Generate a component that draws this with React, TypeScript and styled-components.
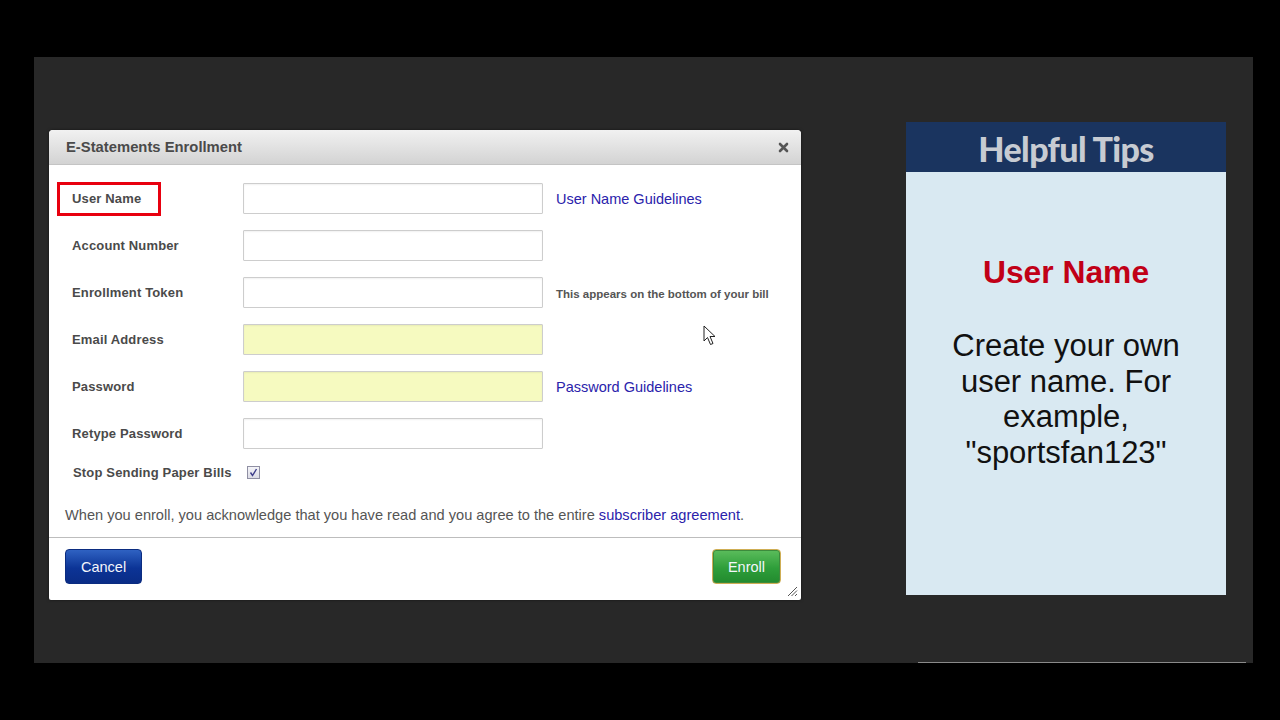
import React from "react";
import styled, { createGlobalStyle } from "styled-components";

const GlobalStyle = createGlobalStyle`
  html, body {
    margin: 0;
    padding: 0;
    background: #000;
    font-family: "Liberation Sans", Arial, sans-serif;
  }
`;

const Screen = styled.div`
  width: 1280px;
  height: 720px;
  background: #000;
  padding: 57px 0 0 34px;
  box-sizing: border-box;
`;

const Stage = styled.div`
  position: relative;
  width: 1219px;
  height: 606px;
  background: #282828;
  display: flex;
  align-items: flex-start;
  padding-left: 15px;
  box-sizing: border-box;

  &::after {
    content: "";
    position: absolute;
    left: 884px;
    right: 7px;
    bottom: 0;
    height: 1px;
    background: #8a8a8a;
  }
`;

const Dialog = styled.div`
  position: relative;
  margin-top: 73px;
  width: 752px;
  height: 470px;
  background: #fff;
  border-radius: 4px 4px 2px 2px;
  box-shadow: 0 0 3px rgba(0, 0, 0, 0.5);
  display: flex;
  flex-direction: column;
`;

const Header = styled.div`
  height: 35px;
  display: flex;
  align-items: center;
  justify-content: space-between;
  padding: 0 12px 0 17px;
  background: linear-gradient(#f1f1f1, #d3d3d3);
  border-radius: 4px 4px 0 0;
  border-bottom: 1px solid #c4c4c4;
  box-sizing: border-box;
`;

const Title = styled.span`
  font-size: 14.8px;
  font-weight: bold;
  color: #4a4a4a;
`;

const Close = styled.button`
  border: 0;
  background: none;
  padding: 0;
  width: 11px;
  height: 11px;
  display: flex;
  cursor: pointer;
`;

const Body = styled.div`
  position: relative;
  flex: 1;
  padding: 18px 0 0 23px;
  display: flex;
  flex-direction: column;
`;

const Rows = styled.div`
  display: grid;
  grid-template-columns: 171px 300px auto;
  grid-auto-rows: 31px;
  row-gap: 16px;
  align-items: center;
`;

const Label = styled.label<{ $highlight?: boolean }>`
  justify-self: start;
  font-size: 13px;
  font-weight: bold;
  letter-spacing: 0.15px;
  color: #4a4a4a;
  line-height: 28px;
  ${(p) =>
    p.$highlight &&
    `
    margin-left: -12px;
    padding: 0 17px 0 12px;
    outline: 3px solid #e8000f;
  `}
`;

const Input = styled.input<{ $filled?: boolean }>`
  width: 300px;
  height: 31px;
  box-sizing: border-box;
  border: 1px solid #cdcdcd;
  border-radius: 1px;
  background: ${(p) => (p.$filled ? "#f6fac0" : "#fff")};
  box-shadow: inset 0 1px 2px rgba(0, 0, 0, 0.06);
  outline: none;
`;

const Aside = styled.div`
  padding-left: 13px;
`;

const Link = styled.a`
  color: #2a22ab;
  font-size: 14.5px;
  text-decoration: none;
`;

const Hint = styled.span`
  font-size: 11.5px;
  font-weight: bold;
  color: #555;
`;

const CheckRow = styled.div`
  display: grid;
  grid-template-columns: 174px auto;
  align-items: center;
  height: 20px;
  margin-top: 13px;
  padding-left: 1px;
`;

const CheckLabel = styled.span`
  font-size: 13px;
  font-weight: bold;
  letter-spacing: 0.17px;
  color: #4a4a4a;
`;

const Check = styled.span`
  width: 13px;
  height: 13px;
  box-sizing: border-box;
  border: 1px solid #8f8fa3;
  background: linear-gradient(#f4f4f8, #dcdce6);
  display: flex;
  align-items: center;
  justify-content: center;
`;

const Note = styled.p`
  margin: 24px 0 0 -7px;
  font-size: 14.6px;
  line-height: 18px;
  color: #555;
  a {
    color: #2a22ab;
    text-decoration: none;
  }
`;

const Footer = styled.div`
  margin-top: 12px;
  border-top: 1px solid #bdbdbd;
  height: 63px;
  box-sizing: border-box;
  padding: 11px 20px 0 16px;
  display: flex;
  align-items: flex-start;
  justify-content: space-between;
`;

const Button = styled.button<{ $tone: "blue" | "green" }>`
  height: 35px;
  padding: 0 ${(p) => (p.$tone === "blue" ? "15px" : "15px")};
  border-radius: 4px;
  font-family: "Liberation Sans", Arial, sans-serif;
  font-size: 14.5px;
  color: #f4f6fb;
  cursor: pointer;
  border: 1px solid ${(p) => (p.$tone === "blue" ? "#0b2c80" : "#cfae55")};
  background: ${(p) =>
    p.$tone === "blue"
      ? "linear-gradient(#2f62c2, #0c3496 55%, #0a2c86)"
      : "linear-gradient(#5cbd5c, #2e9e3a 55%, #228a2e)"};
  box-shadow: ${(p) => (p.$tone === "blue" ? "none" : "inset 0 0 0 1px #3c8b3c")};
`;

const Grip = styled.span`
  position: absolute;
  right: 3px;
  bottom: 3px;
  width: 11px;
  height: 11px;
  display: flex;
`;

const Pointer = styled.span`
  position: absolute;
  left: 654px;
  top: 160px;
  display: flex;
`;

const Tips = styled.aside`
  margin: 65px 0 0 105px;
  width: 320px;
  height: 473px;
  background: #d9e9f2;
  display: flex;
  flex-direction: column;
  align-items: center;
`;

const TipsHeader = styled.div`
  align-self: stretch;
  height: 50px;
  padding-top: 3px;
  box-sizing: border-box;
  background: #1a345f;
  display: flex;
  align-items: center;
  justify-content: center;
  font-family: Lato, "Open Sans", sans-serif;
  font-weight: 900;
  font-size: 34px;
  letter-spacing: -0.6px;
  color: #c7cbd2;
`;

const TipTitle = styled.h2`
  margin: 82px 0 0;
  font-size: 31.8px;
  line-height: 36px;
  font-weight: bold;
  color: #c10017;
`;

const TipText = styled.p`
  margin: 38px 0 0;
  width: 260px;
  text-align: center;
  font-size: 31px;
  line-height: 35.7px;
  color: #111;
`;

const fields = [
  { label: "User Name", highlight: true, aside: <Link href="#">User Name Guidelines</Link> },
  { label: "Account Number" },
  { label: "Enrollment Token", aside: <Hint>This appears on the bottom of your bill</Hint> },
  { label: "Email Address", filled: true },
  { label: "Password", filled: true, aside: <Link href="#">Password Guidelines</Link> },
  { label: "Retype Password" },
];

export default function App() {
  return (
    <>
      <GlobalStyle />
      <Screen>
        <Stage>
          <Dialog>
            <Header>
              <Title>E-Statements Enrollment</Title>
              <Close aria-label="close">
                <svg width="11" height="11" viewBox="0 0 11 11">
                  <path d="M2 2 L9 9 M9 2 L2 9" stroke="#555" strokeWidth="2.6" strokeLinecap="round" />
                </svg>
              </Close>
            </Header>
            <Body>
              <Rows>
                {fields.map((f) => (
                  <React.Fragment key={f.label}>
                    <Label $highlight={f.highlight}>{f.label}</Label>
                    <Input $filled={f.filled} />
                    <Aside>{f.aside}</Aside>
                  </React.Fragment>
                ))}
              </Rows>
              <CheckRow>
                <CheckLabel>Stop Sending Paper Bills</CheckLabel>
                <Check>
                  <svg width="9" height="9" viewBox="0 0 9 9">
                    <path d="M1.5 4.5 L3.5 7.5 L7.5 1" stroke="#3d3d8a" strokeWidth="1.4" fill="none" />
                  </svg>
                </Check>
              </CheckRow>
              <Note>
                When you enroll, you acknowledge that you have read and you agree to the entire{" "}
                <a href="#">subscriber agreement</a>.
              </Note>
              <Pointer>
                <svg width="14" height="21" viewBox="0 0 14 21">
                  <path
                    d="M1 1 L1 16 L4.5 12.5 L7.5 19.5 L10 18.5 L7 11.5 L12 11.5 Z"
                    fill="#fff"
                    stroke="#222"
                    strokeWidth="1"
                    strokeLinejoin="round"
                  />
                </svg>
              </Pointer>
            </Body>
            <Footer>
              <Button $tone="blue">Cancel</Button>
              <Button $tone="green">Enroll</Button>
            </Footer>
            <Grip>
              <svg width="11" height="11" viewBox="0 0 11 11">
                <path d="M10 1 L1 10 M10 4.5 L4.5 10 M10 8 L8 10" stroke="#555" strokeWidth="1" />
              </svg>
            </Grip>
          </Dialog>
          <Tips>
            <TipsHeader>Helpful Tips</TipsHeader>
            <TipTitle>User Name</TipTitle>
            <TipText>Create your own user name. For example, "sportsfan123"</TipText>
          </Tips>
        </Stage>
      </Screen>
    </>
  );
}
